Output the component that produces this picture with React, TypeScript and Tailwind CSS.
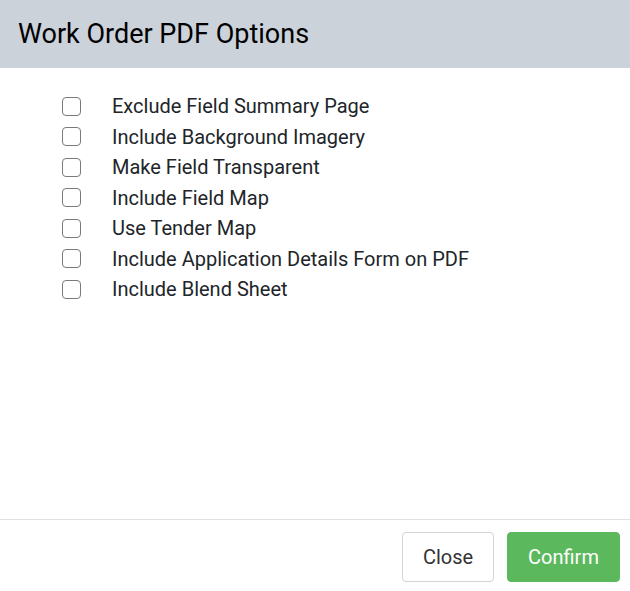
import React, { useState } from 'react';

const OPTIONS = [
  'Exclude Field Summary Page',
  'Include Background Imagery',
  'Make Field Transparent',
  'Include Field Map',
  'Use Tender Map',
  'Include Application Details Form on PDF',
  'Include Blend Sheet',
];

export default function App() {
  const [checked, setChecked] = useState<Record<string, boolean>>({});

  return (
    <div
      className="w-[630px] h-[591px] bg-white flex flex-col text-[#212529]"
      style={{ fontFamily: 'Roboto, "Liberation Sans", sans-serif' }}
    >
      <div className="h-[68px] shrink-0 bg-[#cbd2da] flex items-center px-[18px]">
        <h2 className="text-[27px] font-normal text-black leading-none">Work Order PDF Options</h2>
      </div>

      <div className="flex-1 pt-[23px] pl-[62px]">
        {OPTIONS.map((label) => (
          <label key={label} className="h-[30.5px] flex items-center cursor-pointer">
            <input
              type="checkbox"
              checked={!!checked[label]}
              onChange={() => setChecked((c) => ({ ...c, [label]: !c[label] }))}
              className="appearance-none w-[19px] h-[19px] rounded-[4px] border border-[#7a7a7a] bg-white checked:bg-[#0d6efd] checked:border-[#0d6efd] shrink-0"
            />
            <span className="ml-[31px] text-[20px] leading-none">{label}</span>
          </label>
        ))}
      </div>

      <div className="h-[72px] shrink-0 border-t border-[#dee2e6] flex justify-end gap-[13px] pt-[12px] pr-[10px]">
        <button
          type="button"
          className="h-[50px] w-[92px] rounded-[4px] border border-[#d4d4d4] bg-white text-[20px] text-[#333]"
        >
          Close
        </button>
        <button
          type="button"
          className="h-[50px] w-[113px] rounded-[4px] bg-[#5cb85c] border border-[#5cb85c] text-[20px] text-white"
        >
          Confirm
        </button>
      </div>
    </div>
  );
}
